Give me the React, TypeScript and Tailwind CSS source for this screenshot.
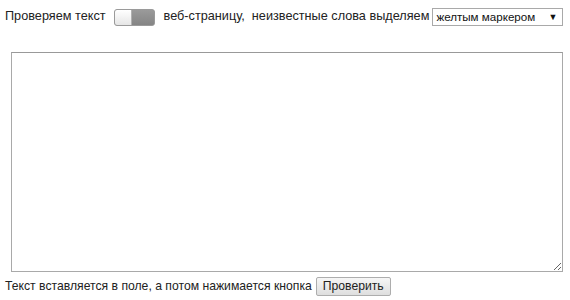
import { useState } from 'react';

export default function App() {
  const [on, setOn] = useState(false);
  const [text, setText] = useState('');

  return (
    <div className="w-[570px] h-[300px] bg-white text-[12.2px] text-[#222] font-['Liberation_Sans',Arial,sans-serif] px-[5px] pt-[8px] whitespace-nowrap">
      {/* Top line */}
      <div className="flex items-center h-[18px] text-[12.7px]">
        <span className="shrink-0">Проверяем текст</span>
        <button
          onClick={() => setOn(!on)}
          className="shrink-0 ml-[8px] w-[41px] h-[17px] rounded-[3px] border border-[#9a9a9a] bg-[#8f8f8f] flex p-0 overflow-hidden"
        >
          <span className="w-[17px] h-full bg-gradient-to-b from-white to-[#e6e6e6] border-r border-[#b0b0b0]" />
          <span className="flex-1 h-full bg-gradient-to-b from-[#9a9a9a] to-[#858585]" />
        </button>
        <span className="shrink-0 ml-[9px]">веб-страницу,&nbsp; неизвестные слова выделяем</span>
        <div className="shrink-0 ml-[3px] w-[131px] h-[18px] border border-[#a9a9a9] flex items-center justify-between pl-[3px] pr-[5px] bg-white text-[11.6px] text-[#111]">
          <span>желтым маркером</span>
          <span className="text-[9px] leading-none">▼</span>
        </div>
      </div>

      {/* Text area */}
      <div className="pl-[6px] pt-[26px]">
        <textarea
          value={text}
          onChange={(e) => setText(e.target.value)}
          className="block w-[552px] h-[220px] border border-[#a9a9a9] border-t-[#999] resize-y outline-none p-1"
        />
      </div>

      {/* Bottom line */}
      <div className="flex items-center mt-[4px] h-[20px]">
        <span className="shrink-0">Текст вставляется в поле, а потом нажимается кнопка</span>
        <button className="shrink-0 ml-[4px] h-[19px] px-[6px] border border-[#adadad] rounded-[2px] bg-gradient-to-b from-[#f6f6f6] to-[#dedede] leading-none">
          Проверить
        </button>
      </div>
    </div>
  );
}
